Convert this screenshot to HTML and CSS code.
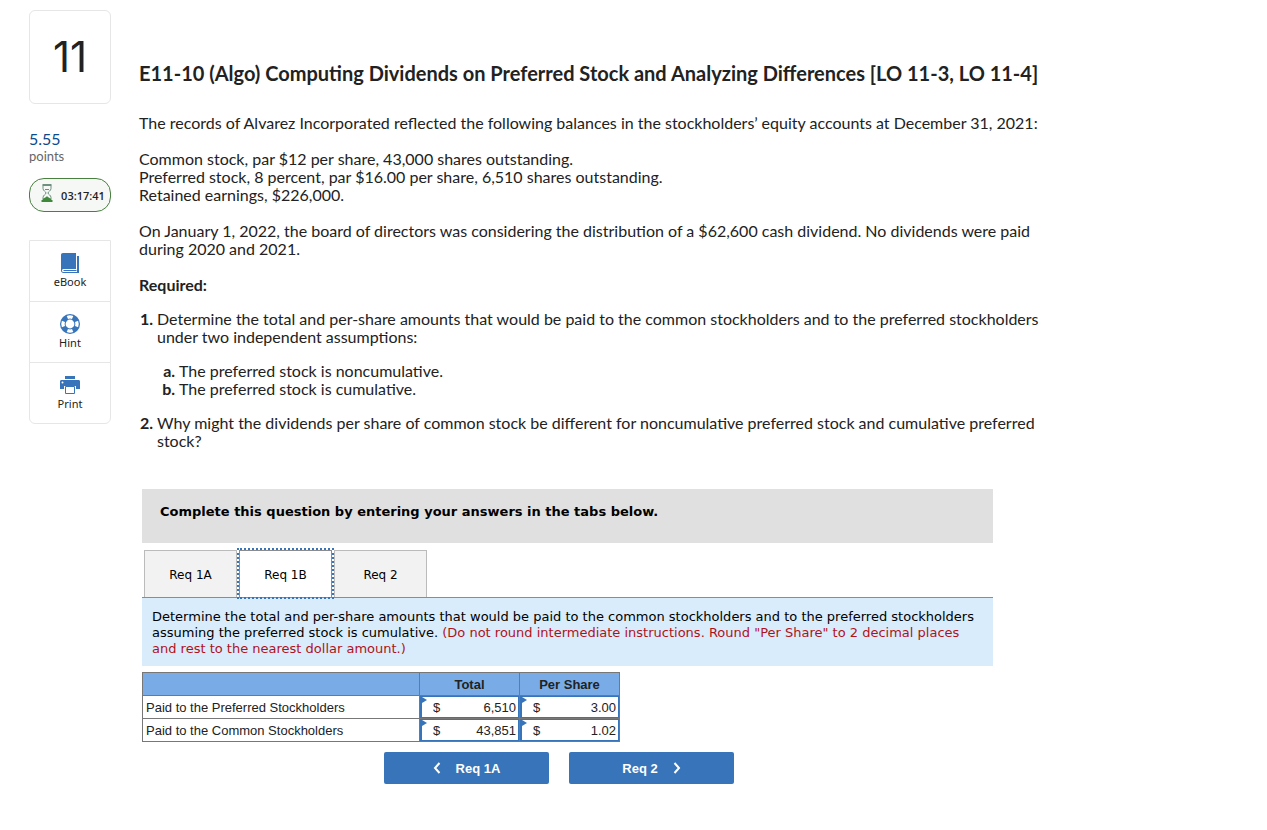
FILE: index.html
```html
<!DOCTYPE html>
<html lang="en">
<head>
    <meta charset="UTF-8">
    <meta name="viewport" content="width=device-width, initial-scale=1.0">
    <title>E11-10 (Algo) Computing Dividends on Preferred Stock</title>
    <link rel="stylesheet" href="styles.css">
</head>
<body>
    <aside class="sidebar">
        <div class="question-number">11</div>

        <div class="points">
            <span class="points-value">5.55</span>
            <span class="points-label">points</span>
        </div>

        <div class="timer">
            <svg class="timer-icon" viewBox="0 0 12 18" width="12" height="18">
                <path d="M2 1.500v3C2 7 5 7.500 5 9S2 11 2 13.500v3M10 1.500v3C10 7 7 7.500 7 9s3 2 3 4.500v3" fill="none" stroke="#6d9080"/>
                <path d="M1.500 1h9" stroke="#6d9080" stroke-width="2"/>
                <path d="M.5 17h11" stroke="#3f8a3a" stroke-width="2"/>
                <path d="M2 17v-2c0-1 2.500-1 4-3 1.500 2 4 2 4 3v2z" fill="#3f8a3a"/>
                <path d="M4 5.500h4" stroke="#6d9080"/>
            </svg>
            <span>03:17:41</span>
        </div>

        <nav class="tools">
            <a class="tool" href="#ebook">
                <svg viewBox="0 0 20 20" width="20" height="20">
                    <path d="M3 0h13v16H4c-1.500 0-2 .5-2 1.500S2.500 19 4 19h13V3h2v17H3.500C2 20 1 19 1 17.500V2C1 .7 1.700 0 3 0z" fill="#3874b9"/>
                    <path d="M3.500 17.500H16.500" stroke="#3874b9"/>
                </svg>
                <span>eBook</span>
            </a>
            <a class="tool" href="#hint">
                <svg viewBox="0 0 20 20" width="20" height="20">
                    <circle cx="10" cy="10" r="10" fill="#3874b9"/>
                    <g fill="#fff">
                        <path d="M6.700 1.900a8.700 8.700 0 0 1 6.600 0L12 5a5.500 5.500 0 0 0-4 0z"/>
                        <path d="M6.700 18.100a8.700 8.700 0 0 0 6.600 0L12 15a5.500 5.500 0 0 1-4 0z"/>
                        <path d="M1.900 6.700a8.700 8.700 0 0 0 0 6.600L5 12a5.500 5.500 0 0 1 0-4z"/>
                        <path d="M18.100 6.700a8.700 8.700 0 0 1 0 6.600L15 12a5.500 5.500 0 0 0 0-4z"/>
                        <circle cx="10" cy="10" r="4.400"/>
                    </g>
                </svg>
                <span>Hint</span>
            </a>
            <a class="tool" href="#print">
                <svg viewBox="0 0 20 20" width="20" height="20">
                    <path d="M5 1h10v3H5z" fill="#3874b9"/>
                    <path d="M1.500 5h17c1 0 1.500.6 1.500 1.500V14h-4v-3H4v3H0V6.500C0 5.600.5 5 1.500 5z" fill="#3874b9"/>
                    <circle cx="2.500" cy="7.500" r="1" fill="#fff"/>
                    <path d="M5.500 11.500h9v7h-9z" fill="#fff" stroke="#3874b9"/>
                </svg>
                <span>Print</span>
            </a>
        </nav>
    </aside>

    <main>
        <h1>E11-10 (Algo) Computing Dividends on Preferred Stock and Analyzing Differences [LO 11-3, LO 11-4]</h1>

        <div class="question-text">
            <p>The records of Alvarez Incorporated reflected the following balances in the stockholders’ equity accounts at December 31, 2021:</p>
            <p>
                Common stock, par $12 per share, 43,000 shares outstanding.<br>
                Preferred stock, 8 percent, par $16.00 per share, 6,510 shares outstanding.<br>
                Retained earnings, $226,000.
            </p>
            <p>On January 1, 2022, the board of directors was considering the distribution of a $62,600 cash dividend. No dividends were paid during 2020 and 2021.</p>
            <p><strong>Required:</strong></p>
            <ol class="requirements">
                <li>
                    Determine the total and per-share amounts that would be paid to the common stockholders and to the preferred stockholders under two independent assumptions:
                    <ol class="assumptions">
                        <li>The preferred stock is noncumulative.</li>
                        <li>The preferred stock is cumulative.</li>
                    </ol>
                </li>
                <li>Why might the dividends per share of common stock be different for noncumulative preferred stock and cumulative preferred stock?</li>
            </ol>
        </div>

        <section class="answer">
            <div class="answer-header">Complete this question by entering your answers in the tabs below.</div>

            <div class="tabs" role="tablist">
                <button class="tab" role="tab">Req 1A</button>
                <button class="tab active" role="tab" aria-selected="true">Req 1B</button>
                <button class="tab" role="tab">Req 2</button>
            </div>

            <div class="instructions">
                Determine the total and per-share amounts that would be paid to the common stockholders and to the preferred stockholders assuming the preferred stock is cumulative. <span class="note">(Do not round intermediate instructions. Round "Per Share" to 2 decimal places and rest to the nearest dollar amount.)</span>
            </div>

            <table class="answer-table">
                <thead>
                    <tr>
                        <th class="label-col"></th>
                        <th>Total</th>
                        <th>Per Share</th>
                    </tr>
                </thead>
                <tbody>
                    <tr>
                        <td class="label-col">Paid to the Preferred Stockholders</td>
                        <td><label class="money">$<input type="text" value="6,510" aria-label="Preferred total"></label></td>
                        <td><label class="money">$<input type="text" value="3.00" aria-label="Preferred per share"></label></td>
                    </tr>
                    <tr>
                        <td class="label-col">Paid to the Common Stockholders</td>
                        <td><label class="money">$<input type="text" value="43,851" aria-label="Common total"></label></td>
                        <td><label class="money">$<input type="text" value="1.02" aria-label="Common per share"></label></td>
                    </tr>
                </tbody>
            </table>

            <div class="pager">
                <button class="pager-btn">
                    <svg viewBox="0 0 8 12" width="8" height="12"><path d="M6.500 1L2 6l4.500 5" fill="none" stroke="#fff" stroke-width="2"/></svg>
                    <span>Req 1A</span>
                </button>
                <button class="pager-btn">
                    <span>Req 2</span>
                    <svg viewBox="0 0 8 12" width="8" height="12"><path d="M1.500 1L6 6l-4.500 5" fill="none" stroke="#fff" stroke-width="2"/></svg>
                </button>
            </div>
        </section>
    </main>
</body>
</html>
```
FILE: styles.css
```css
:root {
    --blue: #3874b9;
    --text-color: #222;
    --line: #e6e6e6;
}

* {
    margin: 0;
    padding: 0;
    box-sizing: border-box;
}

body {
    display: flex;
    gap: 28px;
    padding: 10px 29px;
    font-family: Lato, 'Open Sans', sans-serif;
    color: var(--text-color);
    background-color: white;
}

/* Sidebar */
.sidebar {
    flex: 0 0 82px;
}

.question-number {
    padding: 21px 0;
    border: 1px solid var(--line);
    border-radius: 6px;
    font-family: Inter, sans-serif;
    font-size: 42px;
    line-height: 50px;
    text-align: center;
}

.points {
    margin-top: 26px;
}

.points span {
    display: block;
}

.points-value {
    font-size: 16px;
    line-height: 18px;
    color: #0d4a8c;
}

.points-label {
    font-size: 13px;
    line-height: 16px;
    color: #666;
}

.timer {
    display: flex;
    align-items: center;
    justify-content: center;
    gap: 8px;
    height: 34px;
    margin-top: 14px;
    padding-left: 6px;
    border: 1px solid #47803f;
    border-radius: 15px;
    background-color: #f6f8f6;
    font-family: 'Open Sans', sans-serif;
    font-size: 11px;
    font-weight: 600;
}

.timer-icon {
    margin-bottom: 4px;
}

.tools {
    margin-top: 28px;
    border: 1px solid var(--line);
    border-radius: 0 0 6px 6px;
}

.tool {
    display: flex;
    flex-direction: column;
    align-items: center;
    gap: 1px;
    padding: 12px 0;
    font-family: 'Noto Sans', sans-serif;
    font-size: 11px;
    line-height: 15px;
    color: var(--text-color);
    text-decoration: none;
}

.tool + .tool {
    border-top: 1px solid var(--line);
}

/* Question */
main {
    flex: 1;
    max-width: 904px;
    padding-top: 50px;
}

h1 {
    font-size: 20px;
    line-height: 26px;
    white-space: nowrap;
}

.question-text {
    margin-top: 28px;
    font-size: 16px;
    line-height: 18px;
}

.question-text p {
    margin-bottom: 18px;
}

.requirements {
    margin-top: -2px;
    padding-left: 18px;
}

.requirements li::marker {
    font-weight: bold;
}

.requirements > li + li {
    margin-top: 16px;
}

.assumptions {
    margin-top: 16px;
    padding-left: 22px;
    list-style-type: lower-alpha;
}

/* Answer area */
.answer {
    max-width: 854px;
    margin-top: 39px;
    padding-left: 3px;
}

.answer-header {
    height: 54px;
    padding: 15px 18px;
    background-color: #e0e0e0;
    font-family: Verdana, 'DejaVu Sans', sans-serif;
    font-size: 13px;
    font-weight: bold;
    line-height: 16px;
    color: black;
}

.tabs {
    display: flex;
    gap: 2px;
    padding: 7px 2px 0;
    border-bottom: 1px solid #8c8c8c;
}

.tab {
    width: 93px;
    height: 47px;
    padding-top: 2px;
    border: 1px solid #bbb;
    border-bottom: none;
    background-color: #f2f2f2;
    font-family: Verdana, 'DejaVu Sans', sans-serif;
    font-size: 12px;
    color: black;
    cursor: pointer;
}

.tab.active {
    border-color: #8c8c8c;
    background-color: white;
    outline: 2px dotted var(--blue);
}

.instructions {
    padding: 11px 10px 9px;
    background-color: #d9ecfb;
    font-family: Verdana, 'DejaVu Sans', sans-serif;
    font-size: 13px;
    line-height: 16px;
    color: black;
}

.note {
    color: #b0121b;
}

.answer-table {
    margin-top: 6px;
    border-collapse: collapse;
    font-family: 'Liberation Sans', Arial, sans-serif;
    font-size: 13px;
}

.answer-table th,
.answer-table td {
    width: 100px;
    height: 23px;
    border: 1px solid #777;
}

.answer-table th {
    background-color: #79ace6;
}

.answer-table .label-col {
    width: 277px;
    padding-left: 3px;
}

.money {
    position: relative;
    display: flex;
    align-items: center;
    height: 22px;
    padding-left: 11px;
    border: 2px solid var(--blue);
    border-width: 1px 1px 1px 2px;
}

/* cell corner flag */
.money::before {
    content: "";
    position: absolute;
    top: 0;
    left: 0;
    border: solid transparent;
    border-width: 3px 0 3px 5px;
    border-left-color: var(--blue);
}

.money input {
    flex: 1;
    width: 0;
    padding-right: 2px;
    border: none;
    outline: none;
    background: transparent;
    font: inherit;
    color: inherit;
    text-align: right;
}

.pager {
    display: flex;
    justify-content: center;
    gap: 20px;
    margin-top: 10px;
    padding-right: 17px;
}

.pager-btn {
    display: flex;
    align-items: center;
    justify-content: center;
    gap: 15px;
    width: 165px;
    height: 32px;
    border: none;
    border-radius: 2px;
    background-color: var(--blue);
    font-family: 'Liberation Sans', Arial, sans-serif;
    font-size: 13px;
    font-weight: bold;
    color: white;
    cursor: pointer;
}
```
